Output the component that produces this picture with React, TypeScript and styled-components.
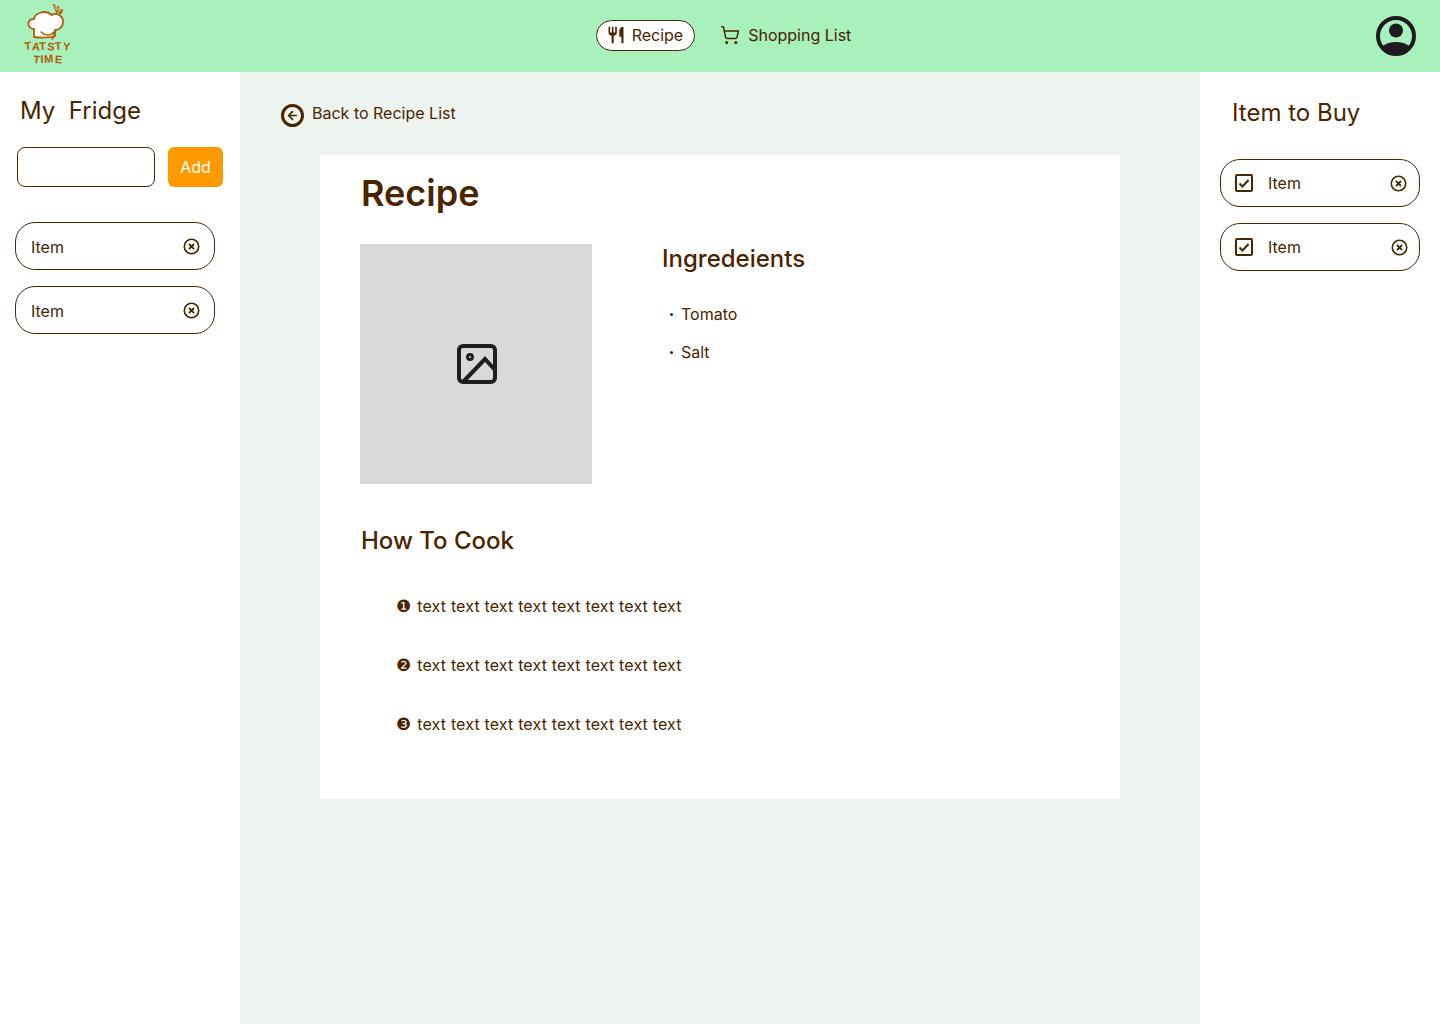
import React from "react";
import styled, { createGlobalStyle } from "styled-components";
import { ArrowLeft, ShoppingCart } from "lucide-react";
import { MdRestaurant } from "react-icons/md";

const BROWN = "#4b2500";

const GlobalStyle = createGlobalStyle`
  html, body {
    margin: 0;
    padding: 0;
  }
  body {
    font-family: Inter, "Noto Sans", sans-serif;
    color: ${BROWN};
    background: #fff;
  }
  * {
    box-sizing: border-box;
  }
`;

const Page = styled.div`
  width: 1440px;
  height: 1024px;
  display: flex;
  flex-direction: column;
  overflow: hidden;
`;

const Header = styled.header`
  height: 72px;
  flex: none;
  display: grid;
  grid-template-columns: 1fr auto 1fr;
  align-items: center;
  padding: 0 24px;
  background: #a8f0bc;
`;

const LogoWrap = styled.div`
  display: flex;
  align-items: center;
`;

const Nav = styled.nav`
  display: flex;
  align-items: center;
  gap: 25px;
  margin: 0 0 2px 7px;
`;

const NavItem = styled.a<{ $active?: boolean }>`
  height: 31px;
  display: flex;
  align-items: center;
  gap: ${(p) => (p.$active ? "6px" : "8px")};
  padding: ${(p) => (p.$active ? "0 11px 0 9px" : "0")};
  border-radius: 16px;
  border: ${(p) => (p.$active ? `1px solid ${BROWN}` : "none")};
  background: ${(p) => (p.$active ? "#fff" : "transparent")};
  font-size: 16px;
  color: ${BROWN};
`;

const Avatar = styled.div`
  justify-self: end;
  display: flex;
`;

const Columns = styled.div`
  flex: 1;
  display: grid;
  grid-template-columns: 240px 960px 240px;
`;

const LeftPanel = styled.aside`
  background: #fff;
  padding: 23px 15px 0;
`;

const RightPanel = styled.aside`
  background: #fff;
  padding: 25px 20px 0;
`;

const PanelTitle = styled.h2<{ $indent: number }>`
  margin: 0 0 0 ${(p) => p.$indent}px;
  height: 32px;
  line-height: 32px;
  font-size: 24px;
  font-weight: 400;
  white-space: pre;
`;

const AddRow = styled.div`
  display: flex;
  margin: 20px 0 35px 2px;
  gap: 13px;
`;

const TextBox = styled.input`
  width: 138px;
  height: 40px;
  border: 1px solid ${BROWN};
  border-radius: 8px;
  background: #fff;
`;

const AddButton = styled.button`
  width: 55px;
  height: 40px;
  border: none;
  border-radius: 6px;
  background: #ff9900;
  color: #fff;
  font: 400 16px Inter, sans-serif;
`;

const ItemList = styled.div<{ $top?: number }>`
  display: flex;
  flex-direction: column;
  gap: 16px;
  margin-top: ${(p) => p.$top ?? 0}px;
`;

const Pill = styled.div<{ $start?: number; $end?: number }>`
  width: 200px;
  height: 48px;
  display: flex;
  align-items: center;
  padding: 0 ${(p) => p.$end ?? 14}px 0 ${(p) => p.$start ?? 15}px;
  border: 1px solid ${BROWN};
  border-radius: 20px;
  font-size: 16px;
`;

const PillLabel = styled.span`
  flex: 1;
  padding-top: 2px;
`;

const CheckLabel = styled.span`
  flex: 1;
  margin-left: 15px;
`;

const Main = styled.main`
  background: #edf4f0;
  padding: 29px 80px 0;
`;

const BackLink = styled.a`
  display: flex;
  align-items: center;
  gap: 8px;
  height: 24px;
  margin: 0 0 30px -39px;
  font-size: 16px;
  color: ${BROWN};
`;

const BackIcon = styled.span`
  width: 23px;
  height: 23px;
  margin-top: 4px;
  display: flex;
  align-items: center;
  justify-content: center;
  border: 3px solid ${BROWN};
  border-radius: 50%;
`;

const Card = styled.section`
  height: 644px;
  background: #fff;
  padding: 15px 40px 0;
`;

const RecipeTitle = styled.h1`
  margin: 0 0 0 1px;
  font-size: 36px;
  line-height: 46px;
  font-weight: 600;
`;

const TopRow = styled.div`
  display: flex;
  margin-top: 28px;
`;

const ImageBox = styled.div`
  width: 232px;
  height: 240px;
  flex: none;
  display: flex;
  align-items: center;
  justify-content: center;
  padding-left: 2px;
  background: #d9d9d9;
`;

const Ingredients = styled.div`
  margin-left: 70px;
`;

const SectionTitle = styled.h3`
  margin: 0;
  font-size: 24px;
  line-height: 30px;
  font-weight: 500;
`;

const IngredientList = styled.ul`
  list-style: none;
  margin: 29px 0 0;
  padding: 0 0 0 8px;
  display: flex;
  flex-direction: column;
  gap: 16px;
`;

const Ingredient = styled.li`
  display: flex;
  align-items: center;
  gap: 8px;
  height: 22px;
  font-size: 16px;
  &::before {
    content: "";
    width: 3px;
    height: 3px;
    border-radius: 50%;
    background: ${BROWN};
  }
`;

const HowTo = styled.div`
  margin: 42px 0 0 1px;
`;

const Steps = styled.ol`
  list-style: none;
  margin: 39px 0 0;
  padding: 0 0 0 35px;
  display: flex;
  flex-direction: column;
  gap: 37px;
`;

const Step = styled.li`
  display: flex;
  align-items: center;
  gap: 6px;
  height: 22px;
  font-size: 16px;
  letter-spacing: 0.01em;
  white-space: pre;
`;

const StepMark = styled.span`
  font-family: "DejaVu Serif", "DejaVu Sans", serif;
  font-size: 17px;
  letter-spacing: 0;
`;

const Logo = () => (
  <svg width="52" height="64" viewBox="0 0 52 64" fill="#b25a06">
    <g fill="none" stroke="#b25a06" strokeLinecap="round" strokeLinejoin="round">
      <path
        d="M10 33 L10 25 C3 25 2 15 10 15 C11 9 21 5 28 11 C33 8 39 12 39 18 C39 23 35 26 31 26 L31 32 C24 34 16 34 10 33 Z"
        fill="#fff"
        strokeWidth="1.8"
      />
      <path d="M17 28 C21 32 27 32 30 28 C31 31 30 33 28 35" strokeWidth="1.5" />
      <path d="M30 1l3 7M34 3l2 6M38 6l-1 3" strokeWidth="2" />
      <path d="M30.5 2l2 4M34.5 4l1 3" stroke="#fff" strokeWidth="0.6" />
    </g>
    <text
      x="1"
      y="46"
      fontFamily="'Liberation Sans', sans-serif"
      fontSize="11"
      fontWeight="700"
      rotate="-6 5 -4 6 -5 4"
      textLength="45"
      lengthAdjust="spacing"
    >
      TATSTY
    </text>
    <text
      x="9"
      y="59"
      fontFamily="'Liberation Sans', sans-serif"
      fontSize="11"
      fontWeight="700"
      rotate="5 -4 -6 4"
      textLength="29"
      lengthAdjust="spacing"
    >
      TIME
    </text>
  </svg>
);

const ProfileIcon = () => (
  <svg width="40" height="40" viewBox="0 0 40 40">
    <defs>
      <clipPath id="avatar-clip">
        <circle cx="20" cy="20" r="18" />
      </clipPath>
    </defs>
    <circle cx="20" cy="20" r="18" fill="none" stroke="#1d1b20" strokeWidth="4" />
    <circle cx="20" cy="14.5" r="7" fill="#1d1b20" />
    <ellipse cx="20" cy="37" rx="17" ry="11" fill="#1d1b20" clipPath="url(#avatar-clip)" />
  </svg>
);

const CloseIcon = () => (
  <svg width="17" height="17" viewBox="0 0 17 17" fill="none" stroke={BROWN}>
    <circle cx="8.5" cy="8.5" r="7.2" strokeWidth="1.6" />
    <path d="M6 6l5 5M11 6l-5 5" strokeWidth="1.8" />
  </svg>
);

const CheckIcon = () => (
  <svg width="18" height="18" viewBox="0 0 18 18" fill="none" stroke={BROWN}>
    <rect x="1" y="1" width="16" height="16" rx="1" strokeWidth="2" />
    <path d="M4.5 9.5l3 3 6-6.5" strokeWidth="2" />
  </svg>
);

const PictureIcon = () => (
  <svg width="40" height="40" viewBox="0 0 40 40" fill="none" stroke="#1e1e1e" strokeWidth="4">
    <rect x="2" y="2" width="36" height="36" rx="4" />
    <circle cx="13" cy="13" r="2.5" strokeWidth="3" />
    <path d="M6 38L28 15l10 11" />
  </svg>
);

const fridgeItems = ["Item", "Item"];
const buyItems = [{ end: 12 }, { end: 11 }];
const steps = ["❶", "❷", "❸"];
const stepText = "text text text text text text text text";

export default function App() {
  return (
    <Page>
      <GlobalStyle />
      <Header>
        <LogoWrap>
          <Logo />
        </LogoWrap>
        <Nav>
          <NavItem $active>
            <MdRestaurant size={20} color={BROWN} />
            Recipe
          </NavItem>
          <NavItem>
            <ShoppingCart size={20} color={BROWN} strokeWidth={1.8} />
            Shopping List
          </NavItem>
        </Nav>
        <Avatar>
          <ProfileIcon />
        </Avatar>
      </Header>
      <Columns>
        <LeftPanel>
          <PanelTitle $indent={5}>{"My  Fridge"}</PanelTitle>
          <AddRow>
            <TextBox />
            <AddButton>Add</AddButton>
          </AddRow>
          <ItemList>
            {fridgeItems.map((item, i) => (
              <Pill key={i}>
                <PillLabel>{item}</PillLabel>
                <CloseIcon />
              </Pill>
            ))}
          </ItemList>
        </LeftPanel>
        <Main>
          <BackLink>
            <BackIcon>
              <ArrowLeft size={13} strokeWidth={3.2} color={BROWN} />
            </BackIcon>
            Back to Recipe List
          </BackLink>
          <Card>
            <RecipeTitle>Recipe</RecipeTitle>
            <TopRow>
              <ImageBox>
                <PictureIcon />
              </ImageBox>
              <Ingredients>
                <SectionTitle>Ingredeients</SectionTitle>
                <IngredientList>
                  <Ingredient>Tomato</Ingredient>
                  <Ingredient>Salt</Ingredient>
                </IngredientList>
              </Ingredients>
            </TopRow>
            <HowTo>
              <SectionTitle>How To Cook</SectionTitle>
              <Steps>
                {steps.map((n) => (
                  <Step key={n}>
                    <StepMark>{n}</StepMark>
                    {stepText}
                  </Step>
                ))}
              </Steps>
            </HowTo>
          </Card>
        </Main>
        <RightPanel>
          <PanelTitle $indent={12}>Item to Buy</PanelTitle>
          <ItemList $top={30}>
            {buyItems.map((item, i) => (
              <Pill key={i} $start={14} $end={item.end}>
                <CheckIcon />
                <CheckLabel>Item</CheckLabel>
                <CloseIcon />
              </Pill>
            ))}
          </ItemList>
        </RightPanel>
      </Columns>
    </Page>
  );
}
